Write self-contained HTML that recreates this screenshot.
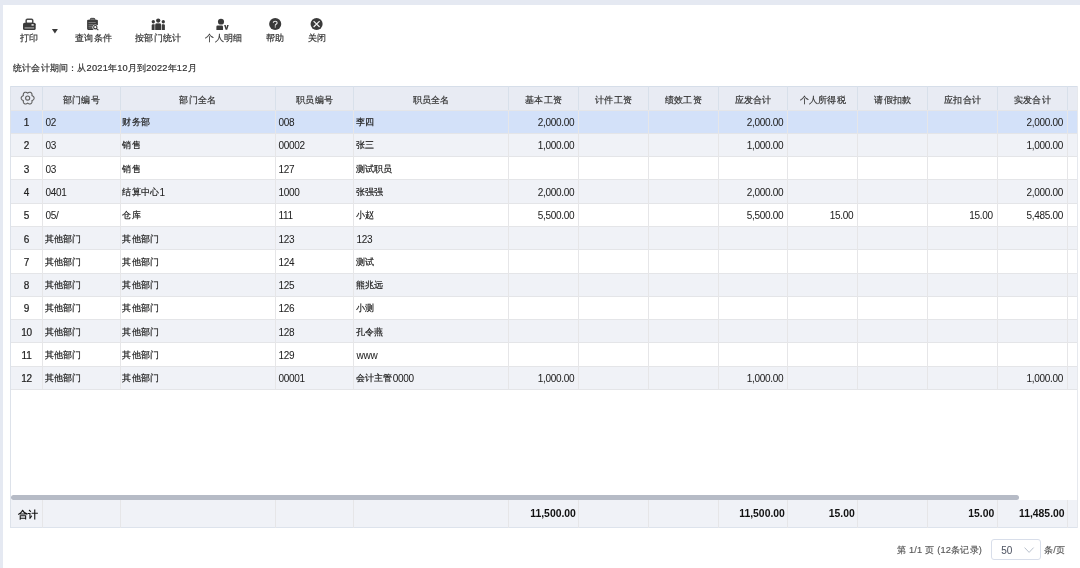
<!DOCTYPE html><html><head><meta charset="utf-8"><style>
*{margin:0;padding:0;box-sizing:border-box}
html,body{width:1080px;height:568px;overflow:hidden;background:#e5e9f2;font-family:"Liberation Sans",sans-serif;}
#wrap{position:absolute;left:0;top:0;width:1080px;height:568px;will-change:transform}
#panel{position:absolute;left:2.75px;top:5.1px;right:0;bottom:0;background:#fff}
.abs{position:absolute}
.tb{position:absolute;top:0;color:#333;font-size:9.25px;text-align:center;white-space:nowrap;letter-spacing:0.26px;-webkit-text-stroke:0.2px #333}
.period{position:absolute;left:13px;top:61.5px;font-size:9.25px;color:#333;white-space:nowrap;letter-spacing:0.2px;-webkit-text-stroke:0.2px #333}
.cell{position:absolute;white-space:nowrap;overflow:hidden;font-size:9.25px;color:#222;display:flex;align-items:center;letter-spacing:0.26px;-webkit-text-stroke:0.2px #222}
.c{justify-content:center}.l{justify-content:flex-start;padding-left:2px}.r{justify-content:flex-end;padding-right:4.6px;letter-spacing:0}
.hd{position:absolute;white-space:nowrap;font-size:9.25px;color:#333;letter-spacing:0.26px;-webkit-text-stroke:0.2px #333;display:flex;align-items:center;justify-content:center}
.vl{position:absolute;width:1px;background:#e6e6e8}
.vh{background:#d8e0ea}
.hl{position:absolute;height:1px;background:#e4e5e8}
.l.a0{padding-left:2.9px}
.c .a{-webkit-text-stroke:0.2px #222}
.ft{font-weight:bold;color:#111;font-size:9.5px;letter-spacing:0.2px;-webkit-text-stroke:0}
.ft .a{font-size:10.4px;letter-spacing:0;-webkit-text-stroke:0;top:-0.6px}
.ft.r{padding-right:3px}
.pg{font-size:9.25px;color:#585858;white-space:nowrap;letter-spacing:0.2px;-webkit-text-stroke:0.15px #585858}
.a{font-size:10px;letter-spacing:-0.3px;position:relative;top:0px;-webkit-text-stroke:0.02px #222}
</style></head><body>
<div id="wrap">
<div id="panel"></div>
<svg class="abs" style="left:0;top:0" width="1080" height="50" viewBox="0 0 1080 50">
<g fill="#3a3a3a">
<rect x="26.15" y="19.25" width="6.6" height="4.2" rx="1.2" fill="none" stroke="#4a4a4a" stroke-width="1.5"/>
<rect x="23" y="22.8" width="12.7" height="7.1" rx="1.5"/>
<rect x="24.6" y="27.1" width="9.5" height="1.6" fill="#fff" opacity="0.42"/>
<rect x="31.5" y="24.1" width="2.2" height="1.6" fill="#fff" opacity="0.85"/>
<path d="M51.9 29 L57.9 29 L54.9 33.6 Z"/>
<rect x="87.1" y="19.7" width="10.8" height="10.2" rx="1.1"/>
<rect x="90.3" y="18.35" width="4.6" height="2.1" rx="0.9" fill="#777" stroke="#3a3a3a" stroke-width="0.9"/>
<rect x="88.5" y="22.1" width="7.2" height="0.75" fill="#fff" opacity="0.45"/>
<rect x="88.5" y="23.95" width="5" height="0.75" fill="#fff" opacity="0.4"/>
<rect x="88.5" y="25.8" width="3.6" height="0.75" fill="#fff" opacity="0.55"/>
<rect x="88.5" y="27.65" width="3.6" height="0.75" fill="#fff" opacity="0.4"/>
<circle cx="95.3" cy="27.3" r="2.9" fill="#fff"/>
<rect x="94" y="25.2" width="5" height="5.5" fill="#fff"/>
<circle cx="95.3" cy="27.2" r="1.65" fill="none" stroke="#333" stroke-width="1.1"/>
<path d="M96.3 28.3 L98.3 30.1" stroke="#3a3a3a" stroke-width="1.1"/>
<circle cx="158.2" cy="20.6" r="2.15"/>
<circle cx="153.3" cy="21.75" r="1.65"/>
<circle cx="163.3" cy="21.75" r="1.65"/>
<path d="M155.3 24.9 Q155.3 23.6 156.6 23.6 L159.8 23.6 Q161.1 23.6 161.1 24.9 L161.1 30 L155.3 30 Z" stroke="#fff" stroke-width="0.5"/>
<path d="M151.7 25.4 Q151.7 24.3 152.8 24.3 L154.6 24.3 L154.6 30 L151.7 30 Z"/>
<path d="M161.8 24.3 L163.8 24.3 Q164.9 24.3 164.9 25.4 L164.9 30 L161.8 30 Z"/>
<path d="M155.3 24.9 Q155.3 23.6 156.6 23.6 L159.8 23.6 Q161.1 23.6 161.1 24.9 L161.1 30 L155.3 30 Z"/>
<ellipse cx="221" cy="21.65" rx="3.05" ry="2.9"/>
<path d="M216.4 26.8 Q216.4 25.6 217.6 25.6 L221.8 25.6 Q223 25.6 223 26.8 L223 29.9 L216.4 29.9 Z"/>
<path d="M224.1 25.1 L225.7 25.1 L226.4 27.9 L227.1 25.1 L228.7 25.1 L227.2 29.8 L225.6 29.8 Z"/>
<circle cx="275.2" cy="24.05" r="6.05"/>
<circle cx="316.6" cy="24.05" r="6.05"/>
</g>
<path d="M273.3 22.8 Q273.3 21.2 275.2 21.2 Q277.1 21.2 277.1 22.7 Q277.1 23.7 276.1 24.2 Q275.3 24.6 275.3 25.7" fill="none" stroke="#e8e8e8" stroke-width="1.15"/>
<circle cx="275.3" cy="26.9" r="0.65" fill="#e0e0e0"/>
<path d="M313.6 21.1 L319.6 27.0 M319.6 21.1 L313.6 27.0" stroke="#f0f0f0" stroke-width="1.2"/>
</svg>
<svg class="abs" style="left:0;top:80px;z-index:5" width="60" height="40" viewBox="0 80 60 40"><path d="M34.10 98.10 L34.09 98.27 L34.07 98.44 L34.04 98.60 L33.99 98.77 L33.92 98.93 L33.85 99.08 L33.76 99.23 L33.66 99.38 L33.56 99.52 L33.44 99.65 L33.31 99.78 L33.17 99.89 L33.03 100.01 L32.89 100.11 L32.74 100.21 L32.58 100.30 L32.43 100.38 L32.27 100.46 L32.12 100.53 L31.98 100.60 L31.99 100.76 L32.00 100.93 L32.01 101.10 L32.02 101.27 L32.02 101.45 L32.01 101.63 L31.99 101.81 L31.97 101.99 L31.93 102.16 L31.89 102.34 L31.83 102.51 L31.76 102.67 L31.69 102.83 L31.60 102.98 L31.50 103.12 L31.40 103.26 L31.28 103.38 L31.15 103.49 L31.02 103.60 L30.88 103.69 L30.73 103.76 L30.57 103.83 L30.41 103.88 L30.24 103.92 L30.07 103.95 L29.90 103.96 L29.73 103.96 L29.55 103.95 L29.37 103.92 L29.20 103.89 L29.03 103.84 L28.86 103.78 L28.69 103.71 L28.53 103.64 L28.37 103.56 L28.21 103.47 L28.07 103.38 L27.92 103.28 L27.78 103.19 L27.65 103.10 L27.52 103.19 L27.38 103.28 L27.23 103.38 L27.09 103.47 L26.93 103.56 L26.77 103.64 L26.61 103.71 L26.44 103.78 L26.27 103.84 L26.10 103.89 L25.93 103.92 L25.75 103.95 L25.57 103.96 L25.40 103.96 L25.23 103.95 L25.06 103.92 L24.89 103.88 L24.73 103.83 L24.57 103.76 L24.43 103.69 L24.28 103.60 L24.15 103.49 L24.02 103.38 L23.90 103.26 L23.80 103.12 L23.70 102.98 L23.61 102.83 L23.54 102.67 L23.47 102.51 L23.41 102.34 L23.37 102.16 L23.33 101.99 L23.31 101.81 L23.29 101.63 L23.28 101.45 L23.28 101.27 L23.29 101.10 L23.30 100.93 L23.31 100.76 L23.32 100.60 L23.18 100.53 L23.03 100.46 L22.87 100.38 L22.72 100.30 L22.56 100.21 L22.41 100.11 L22.27 100.01 L22.13 99.89 L21.99 99.78 L21.86 99.65 L21.74 99.52 L21.64 99.38 L21.54 99.23 L21.45 99.08 L21.38 98.93 L21.31 98.77 L21.26 98.60 L21.23 98.44 L21.21 98.27 L21.20 98.10 L21.21 97.93 L21.23 97.76 L21.26 97.60 L21.31 97.43 L21.38 97.27 L21.45 97.12 L21.54 96.97 L21.64 96.82 L21.74 96.68 L21.86 96.55 L21.99 96.42 L22.13 96.31 L22.27 96.19 L22.41 96.09 L22.56 95.99 L22.72 95.90 L22.87 95.82 L23.03 95.74 L23.18 95.67 L23.32 95.60 L23.31 95.44 L23.30 95.27 L23.29 95.10 L23.28 94.93 L23.28 94.75 L23.29 94.57 L23.31 94.39 L23.33 94.21 L23.37 94.04 L23.41 93.86 L23.47 93.69 L23.54 93.53 L23.61 93.37 L23.70 93.22 L23.80 93.08 L23.90 92.94 L24.02 92.82 L24.15 92.71 L24.28 92.60 L24.42 92.51 L24.57 92.44 L24.73 92.37 L24.89 92.32 L25.06 92.28 L25.23 92.25 L25.40 92.24 L25.57 92.24 L25.75 92.25 L25.93 92.28 L26.10 92.31 L26.27 92.36 L26.44 92.42 L26.61 92.49 L26.77 92.56 L26.93 92.64 L27.09 92.73 L27.23 92.82 L27.38 92.92 L27.52 93.01 L27.65 93.10 L27.78 93.01 L27.92 92.92 L28.07 92.82 L28.21 92.73 L28.37 92.64 L28.53 92.56 L28.69 92.49 L28.86 92.42 L29.03 92.36 L29.20 92.31 L29.37 92.28 L29.55 92.25 L29.73 92.24 L29.90 92.24 L30.07 92.25 L30.24 92.28 L30.41 92.32 L30.57 92.37 L30.73 92.44 L30.88 92.51 L31.02 92.60 L31.15 92.71 L31.28 92.82 L31.40 92.94 L31.50 93.08 L31.60 93.22 L31.69 93.37 L31.76 93.53 L31.83 93.69 L31.89 93.86 L31.93 94.04 L31.97 94.21 L31.99 94.39 L32.01 94.57 L32.02 94.75 L32.02 94.93 L32.01 95.10 L32.00 95.27 L31.99 95.44 L31.98 95.60 L32.12 95.67 L32.27 95.74 L32.43 95.82 L32.58 95.90 L32.74 95.99 L32.89 96.09 L33.03 96.19 L33.17 96.31 L33.31 96.42 L33.44 96.55 L33.56 96.68 L33.66 96.82 L33.76 96.97 L33.85 97.12 L33.92 97.27 L33.99 97.43 L34.04 97.60 L34.07 97.76 L34.09 97.93 Z" fill="none" stroke="#606060" stroke-width="1.1"/><circle cx="27.65" cy="98.1" r="2.05" fill="none" stroke="#606060" stroke-width="1.1"/></svg>
<div class="tb" style="left:-10.8px;width:80px;top:32px">打印</div>
<div class="tb" style="left:53.599999999999994px;width:80px;top:32px">查询条件</div>
<div class="tb" style="left:118.19999999999999px;width:80px;top:32px">按部门统计</div>
<div class="tb" style="left:184px;width:80px;top:32px">个人明细</div>
<div class="tb" style="left:235.2px;width:80px;top:32px">帮助</div>
<div class="tb" style="left:277.3px;width:80px;top:32px">关闭</div>
<div class="period">统计会计期间：从2021年10月到2022年12月</div>
<div class="abs" style="left:10.5px;top:86.0px;width:1066.5px;height:23.75px;background:#e8ebf3;border-top:1.75px solid #d6dee9"></div>
<div class="abs" style="left:10.5px;top:110.00px;width:1066.5px;height:23.34px;background:#d3e1f9"></div>
<div class="abs" style="left:10.5px;top:133.29px;width:1066.5px;height:23.34px;background:#f0f2f7"></div>
<div class="abs" style="left:10.5px;top:156.58px;width:1066.5px;height:23.34px;background:#ffffff"></div>
<div class="abs" style="left:10.5px;top:179.87px;width:1066.5px;height:23.34px;background:#f0f2f7"></div>
<div class="abs" style="left:10.5px;top:203.16px;width:1066.5px;height:23.34px;background:#ffffff"></div>
<div class="abs" style="left:10.5px;top:226.45px;width:1066.5px;height:23.34px;background:#f0f2f7"></div>
<div class="abs" style="left:10.5px;top:249.74px;width:1066.5px;height:23.34px;background:#ffffff"></div>
<div class="abs" style="left:10.5px;top:273.03px;width:1066.5px;height:23.34px;background:#f0f2f7"></div>
<div class="abs" style="left:10.5px;top:296.32px;width:1066.5px;height:23.34px;background:#ffffff"></div>
<div class="abs" style="left:10.5px;top:319.61px;width:1066.5px;height:23.34px;background:#f0f2f7"></div>
<div class="abs" style="left:10.5px;top:342.90px;width:1066.5px;height:23.34px;background:#ffffff"></div>
<div class="abs" style="left:10.5px;top:366.19px;width:1066.5px;height:23.34px;background:#f0f2f7"></div>
<div class="hl" style="left:10.5px;top:109.50px;width:1066.5px"></div>
<div class="hl" style="left:10.5px;top:132.79px;width:1066.5px"></div>
<div class="hl" style="left:10.5px;top:156.08px;width:1066.5px"></div>
<div class="hl" style="left:10.5px;top:179.37px;width:1066.5px"></div>
<div class="hl" style="left:10.5px;top:202.66px;width:1066.5px"></div>
<div class="hl" style="left:10.5px;top:225.95px;width:1066.5px"></div>
<div class="hl" style="left:10.5px;top:249.24px;width:1066.5px"></div>
<div class="hl" style="left:10.5px;top:272.53px;width:1066.5px"></div>
<div class="hl" style="left:10.5px;top:295.82px;width:1066.5px"></div>
<div class="hl" style="left:10.5px;top:319.11px;width:1066.5px"></div>
<div class="hl" style="left:10.5px;top:342.40px;width:1066.5px"></div>
<div class="hl" style="left:10.5px;top:365.69px;width:1066.5px"></div>
<div class="hl" style="left:10.5px;top:388.98px;width:1066.5px"></div>
<div class="vl" style="left:42.00px;top:110.00px;height:279.48px"></div>
<div class="vl vh" style="left:42.00px;top:86.0px;height:23.75px"></div>
<div class="vl" style="left:119.90px;top:110.00px;height:279.48px"></div>
<div class="vl vh" style="left:119.90px;top:86.0px;height:23.75px"></div>
<div class="vl" style="left:275.10px;top:110.00px;height:279.48px"></div>
<div class="vl vh" style="left:275.10px;top:86.0px;height:23.75px"></div>
<div class="vl" style="left:353.20px;top:110.00px;height:279.48px"></div>
<div class="vl vh" style="left:353.20px;top:86.0px;height:23.75px"></div>
<div class="vl" style="left:507.90px;top:110.00px;height:279.48px"></div>
<div class="vl vh" style="left:507.90px;top:86.0px;height:23.75px"></div>
<div class="vl" style="left:578.40px;top:110.00px;height:279.48px"></div>
<div class="vl vh" style="left:578.40px;top:86.0px;height:23.75px"></div>
<div class="vl" style="left:647.90px;top:110.00px;height:279.48px"></div>
<div class="vl vh" style="left:647.90px;top:86.0px;height:23.75px"></div>
<div class="vl" style="left:717.70px;top:110.00px;height:279.48px"></div>
<div class="vl vh" style="left:717.70px;top:86.0px;height:23.75px"></div>
<div class="vl" style="left:787.40px;top:110.00px;height:279.48px"></div>
<div class="vl vh" style="left:787.40px;top:86.0px;height:23.75px"></div>
<div class="vl" style="left:857.30px;top:110.00px;height:279.48px"></div>
<div class="vl vh" style="left:857.30px;top:86.0px;height:23.75px"></div>
<div class="vl" style="left:927.30px;top:110.00px;height:279.48px"></div>
<div class="vl vh" style="left:927.30px;top:86.0px;height:23.75px"></div>
<div class="vl" style="left:996.80px;top:110.00px;height:279.48px"></div>
<div class="vl vh" style="left:996.80px;top:86.0px;height:23.75px"></div>
<div class="vl" style="left:1067.10px;top:110.00px;height:279.48px"></div>
<div class="vl vh" style="left:1067.10px;top:86.0px;height:23.75px"></div>
<div class="vl" style="left:10.0px;top:86.0px;height:442.0px;background:#dde2ea"></div>
<div class="vl" style="left:1076.5px;top:86.0px;height:442.0px;background:#e6e9ee"></div>
<div class="hd" style="left:42.5px;top:88.6px;width:77.9px;height:23.75px">部门编号</div>
<div class="hd" style="left:120.4px;top:88.6px;width:155.20000000000002px;height:23.75px">部门全名</div>
<div class="hd" style="left:275.6px;top:88.6px;width:78.09999999999997px;height:23.75px">职员编号</div>
<div class="hd" style="left:353.7px;top:88.6px;width:154.7px;height:23.75px">职员全名</div>
<div class="hd" style="left:508.4px;top:88.6px;width:70.5px;height:23.75px">基本工资</div>
<div class="hd" style="left:578.9px;top:88.6px;width:69.5px;height:23.75px">计件工资</div>
<div class="hd" style="left:648.4px;top:88.6px;width:69.80000000000007px;height:23.75px">绩效工资</div>
<div class="hd" style="left:718.2px;top:88.6px;width:69.69999999999993px;height:23.75px">应发合计</div>
<div class="hd" style="left:787.9px;top:88.6px;width:69.89999999999998px;height:23.75px">个人所得税</div>
<div class="hd" style="left:857.8px;top:88.6px;width:70.0px;height:23.75px">请假扣款</div>
<div class="hd" style="left:927.8px;top:88.6px;width:69.5px;height:23.75px">应扣合计</div>
<div class="hd" style="left:997.3px;top:88.6px;width:70.29999999999995px;height:23.75px">实发合计</div>
<div class="cell c" style="left:10.5px;top:111.00px;width:32.0px;height:23.29px"><span class="a">1</span></div>
<div class="cell l a0" style="left:42.5px;top:111.00px;width:77.9px;height:23.29px"><span class="a">02</span></div>
<div class="cell l" style="left:120.4px;top:111.00px;width:155.20000000000002px;height:23.29px">财务部</div>
<div class="cell l a0" style="left:275.6px;top:111.00px;width:78.09999999999997px;height:23.29px"><span class="a">008</span></div>
<div class="cell l" style="left:353.7px;top:111.00px;width:154.7px;height:23.29px">李四</div>
<div class="cell r" style="left:508.4px;top:111.00px;width:70.5px;height:23.29px"><span class="a">2,000.00</span></div>
<div class="cell r" style="left:718.2px;top:111.00px;width:69.69999999999993px;height:23.29px"><span class="a">2,000.00</span></div>
<div class="cell r" style="left:997.3px;top:111.00px;width:70.29999999999995px;height:23.29px"><span class="a">2,000.00</span></div>
<div class="cell c" style="left:10.5px;top:134.29px;width:32.0px;height:23.29px"><span class="a">2</span></div>
<div class="cell l a0" style="left:42.5px;top:134.29px;width:77.9px;height:23.29px"><span class="a">03</span></div>
<div class="cell l" style="left:120.4px;top:134.29px;width:155.20000000000002px;height:23.29px">销售</div>
<div class="cell l a0" style="left:275.6px;top:134.29px;width:78.09999999999997px;height:23.29px"><span class="a">00002</span></div>
<div class="cell l" style="left:353.7px;top:134.29px;width:154.7px;height:23.29px">张三</div>
<div class="cell r" style="left:508.4px;top:134.29px;width:70.5px;height:23.29px"><span class="a">1,000.00</span></div>
<div class="cell r" style="left:718.2px;top:134.29px;width:69.69999999999993px;height:23.29px"><span class="a">1,000.00</span></div>
<div class="cell r" style="left:997.3px;top:134.29px;width:70.29999999999995px;height:23.29px"><span class="a">1,000.00</span></div>
<div class="cell c" style="left:10.5px;top:157.58px;width:32.0px;height:23.29px"><span class="a">3</span></div>
<div class="cell l a0" style="left:42.5px;top:157.58px;width:77.9px;height:23.29px"><span class="a">03</span></div>
<div class="cell l" style="left:120.4px;top:157.58px;width:155.20000000000002px;height:23.29px">销售</div>
<div class="cell l a0" style="left:275.6px;top:157.58px;width:78.09999999999997px;height:23.29px"><span class="a">127</span></div>
<div class="cell l" style="left:353.7px;top:157.58px;width:154.7px;height:23.29px">测试职员</div>
<div class="cell c" style="left:10.5px;top:180.87px;width:32.0px;height:23.29px"><span class="a">4</span></div>
<div class="cell l a0" style="left:42.5px;top:180.87px;width:77.9px;height:23.29px"><span class="a">0401</span></div>
<div class="cell l" style="left:120.4px;top:180.87px;width:155.20000000000002px;height:23.29px">结算中心<span class="a">1</span></div>
<div class="cell l a0" style="left:275.6px;top:180.87px;width:78.09999999999997px;height:23.29px"><span class="a">1000</span></div>
<div class="cell l" style="left:353.7px;top:180.87px;width:154.7px;height:23.29px">张强强</div>
<div class="cell r" style="left:508.4px;top:180.87px;width:70.5px;height:23.29px"><span class="a">2,000.00</span></div>
<div class="cell r" style="left:718.2px;top:180.87px;width:69.69999999999993px;height:23.29px"><span class="a">2,000.00</span></div>
<div class="cell r" style="left:997.3px;top:180.87px;width:70.29999999999995px;height:23.29px"><span class="a">2,000.00</span></div>
<div class="cell c" style="left:10.5px;top:204.16px;width:32.0px;height:23.29px"><span class="a">5</span></div>
<div class="cell l a0" style="left:42.5px;top:204.16px;width:77.9px;height:23.29px"><span class="a">05/</span></div>
<div class="cell l" style="left:120.4px;top:204.16px;width:155.20000000000002px;height:23.29px">仓库</div>
<div class="cell l a0" style="left:275.6px;top:204.16px;width:78.09999999999997px;height:23.29px"><span class="a">111</span></div>
<div class="cell l" style="left:353.7px;top:204.16px;width:154.7px;height:23.29px">小赵</div>
<div class="cell r" style="left:508.4px;top:204.16px;width:70.5px;height:23.29px"><span class="a">5,500.00</span></div>
<div class="cell r" style="left:718.2px;top:204.16px;width:69.69999999999993px;height:23.29px"><span class="a">5,500.00</span></div>
<div class="cell r" style="left:787.9px;top:204.16px;width:69.89999999999998px;height:23.29px"><span class="a">15.00</span></div>
<div class="cell r" style="left:927.8px;top:204.16px;width:69.5px;height:23.29px"><span class="a">15.00</span></div>
<div class="cell r" style="left:997.3px;top:204.16px;width:70.29999999999995px;height:23.29px"><span class="a">5,485.00</span></div>
<div class="cell c" style="left:10.5px;top:227.45px;width:32.0px;height:23.29px"><span class="a">6</span></div>
<div class="cell l" style="left:42.5px;top:227.45px;width:77.9px;height:23.29px">其他部门</div>
<div class="cell l" style="left:120.4px;top:227.45px;width:155.20000000000002px;height:23.29px">其他部门</div>
<div class="cell l a0" style="left:275.6px;top:227.45px;width:78.09999999999997px;height:23.29px"><span class="a">123</span></div>
<div class="cell l a0" style="left:353.7px;top:227.45px;width:154.7px;height:23.29px"><span class="a">123</span></div>
<div class="cell c" style="left:10.5px;top:250.74px;width:32.0px;height:23.29px"><span class="a">7</span></div>
<div class="cell l" style="left:42.5px;top:250.74px;width:77.9px;height:23.29px">其他部门</div>
<div class="cell l" style="left:120.4px;top:250.74px;width:155.20000000000002px;height:23.29px">其他部门</div>
<div class="cell l a0" style="left:275.6px;top:250.74px;width:78.09999999999997px;height:23.29px"><span class="a">124</span></div>
<div class="cell l" style="left:353.7px;top:250.74px;width:154.7px;height:23.29px">测试</div>
<div class="cell c" style="left:10.5px;top:274.03px;width:32.0px;height:23.29px"><span class="a">8</span></div>
<div class="cell l" style="left:42.5px;top:274.03px;width:77.9px;height:23.29px">其他部门</div>
<div class="cell l" style="left:120.4px;top:274.03px;width:155.20000000000002px;height:23.29px">其他部门</div>
<div class="cell l a0" style="left:275.6px;top:274.03px;width:78.09999999999997px;height:23.29px"><span class="a">125</span></div>
<div class="cell l" style="left:353.7px;top:274.03px;width:154.7px;height:23.29px">熊兆远</div>
<div class="cell c" style="left:10.5px;top:297.32px;width:32.0px;height:23.29px"><span class="a">9</span></div>
<div class="cell l" style="left:42.5px;top:297.32px;width:77.9px;height:23.29px">其他部门</div>
<div class="cell l" style="left:120.4px;top:297.32px;width:155.20000000000002px;height:23.29px">其他部门</div>
<div class="cell l a0" style="left:275.6px;top:297.32px;width:78.09999999999997px;height:23.29px"><span class="a">126</span></div>
<div class="cell l" style="left:353.7px;top:297.32px;width:154.7px;height:23.29px">小测</div>
<div class="cell c" style="left:10.5px;top:320.61px;width:32.0px;height:23.29px"><span class="a">10</span></div>
<div class="cell l" style="left:42.5px;top:320.61px;width:77.9px;height:23.29px">其他部门</div>
<div class="cell l" style="left:120.4px;top:320.61px;width:155.20000000000002px;height:23.29px">其他部门</div>
<div class="cell l a0" style="left:275.6px;top:320.61px;width:78.09999999999997px;height:23.29px"><span class="a">128</span></div>
<div class="cell l" style="left:353.7px;top:320.61px;width:154.7px;height:23.29px">孔令燕</div>
<div class="cell c" style="left:10.5px;top:343.90px;width:32.0px;height:23.29px"><span class="a">11</span></div>
<div class="cell l" style="left:42.5px;top:343.90px;width:77.9px;height:23.29px">其他部门</div>
<div class="cell l" style="left:120.4px;top:343.90px;width:155.20000000000002px;height:23.29px">其他部门</div>
<div class="cell l a0" style="left:275.6px;top:343.90px;width:78.09999999999997px;height:23.29px"><span class="a">129</span></div>
<div class="cell l a0" style="left:353.7px;top:343.90px;width:154.7px;height:23.29px"><span class="a">www</span></div>
<div class="cell c" style="left:10.5px;top:367.19px;width:32.0px;height:23.29px"><span class="a">12</span></div>
<div class="cell l" style="left:42.5px;top:367.19px;width:77.9px;height:23.29px">其他部门</div>
<div class="cell l" style="left:120.4px;top:367.19px;width:155.20000000000002px;height:23.29px">其他部门</div>
<div class="cell l a0" style="left:275.6px;top:367.19px;width:78.09999999999997px;height:23.29px"><span class="a">00001</span></div>
<div class="cell l" style="left:353.7px;top:367.19px;width:154.7px;height:23.29px">会计主管<span class="a">0000</span></div>
<div class="cell r" style="left:508.4px;top:367.19px;width:70.5px;height:23.29px"><span class="a">1,000.00</span></div>
<div class="cell r" style="left:718.2px;top:367.19px;width:69.69999999999993px;height:23.29px"><span class="a">1,000.00</span></div>
<div class="cell r" style="left:997.3px;top:367.19px;width:70.29999999999995px;height:23.29px"><span class="a">1,000.00</span></div>
<div class="abs" style="left:10.5px;top:495px;width:1008.0px;height:5px;background:#b6bbc6;border-radius:2.5px"></div>
<div class="abs" style="left:10.5px;top:500.0px;width:1066.5px;height:28.0px;background:#f0f2f7;border-bottom:1.6px solid #dde3ec"></div>
<div class="vl" style="left:42.00px;top:500.0px;height:28.0px"></div>
<div class="vl" style="left:119.90px;top:500.0px;height:28.0px"></div>
<div class="vl" style="left:275.10px;top:500.0px;height:28.0px"></div>
<div class="vl" style="left:353.20px;top:500.0px;height:28.0px"></div>
<div class="vl" style="left:507.90px;top:500.0px;height:28.0px"></div>
<div class="vl" style="left:578.40px;top:500.0px;height:28.0px"></div>
<div class="vl" style="left:647.90px;top:500.0px;height:28.0px"></div>
<div class="vl" style="left:717.70px;top:500.0px;height:28.0px"></div>
<div class="vl" style="left:787.40px;top:500.0px;height:28.0px"></div>
<div class="vl" style="left:857.30px;top:500.0px;height:28.0px"></div>
<div class="vl" style="left:927.30px;top:500.0px;height:28.0px"></div>
<div class="vl" style="left:996.80px;top:500.0px;height:28.0px"></div>
<div class="vl" style="left:1067.10px;top:500.0px;height:28.0px"></div>
<div class="cell ft c" style="left:12.3px;top:501.0px;width:32.0px;height:28.0px">合计</div>
<div class="cell ft r" style="left:508.4px;top:500.0px;width:70.5px;height:28.0px"><span class="a">11,500.00</span></div>
<div class="cell ft r" style="left:718.2px;top:500.0px;width:69.69999999999993px;height:28.0px"><span class="a">11,500.00</span></div>
<div class="cell ft r" style="left:787.9px;top:500.0px;width:69.89999999999998px;height:28.0px"><span class="a">15.00</span></div>
<div class="cell ft r" style="left:927.8px;top:500.0px;width:69.5px;height:28.0px"><span class="a">15.00</span></div>
<div class="cell ft r" style="left:997.3px;top:500.0px;width:70.29999999999995px;height:28.0px"><span class="a">11,485.00</span></div>
<div class="abs pg" style="left:897px;top:543.7px;">第 1/1 页 (12条记录)</div>
<div class="abs" style="left:991.3px;top:539.4px;width:49.6px;height:20.2px;border:1px solid #d8deea;border-radius:3px"></div>
<div class="abs" style="left:1001.2px;top:544.6px;font-size:10px;color:#4f5563;-webkit-text-stroke:0.05px #4f5563">50</div>
<svg class="abs" style="left:1020px;top:540px" width="20" height="18" viewBox="1020 540 20 18"><path d="M1024.6 547.6 L1029.1 552.4 L1033.6 547.6" fill="none" stroke="#b9c1cd" stroke-width="1"/></svg>
<div class="abs pg" style="left:1044px;top:543.7px;">条/页</div>
</div></body></html>
